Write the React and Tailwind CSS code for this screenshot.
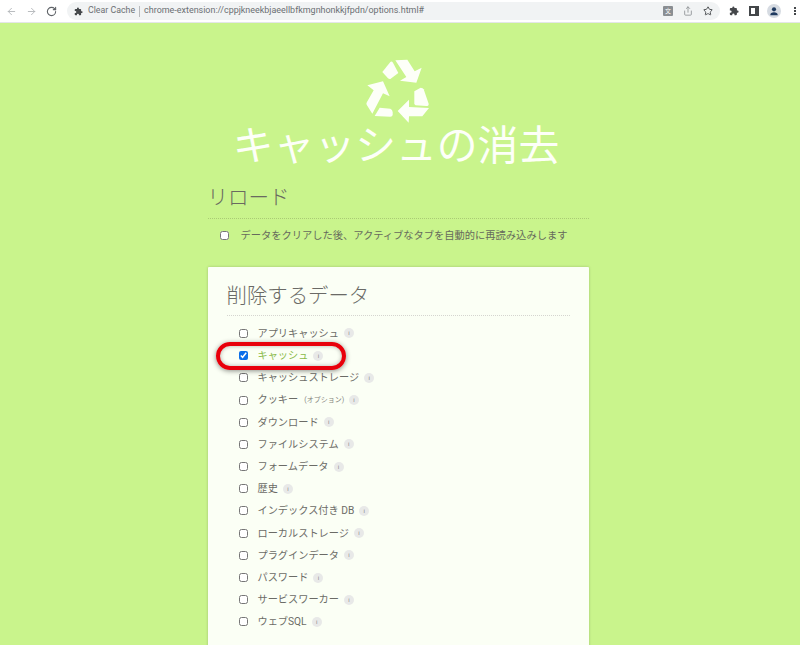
import React from 'react';
import { ArrowLeft, ArrowRight, RotateCw, Star, Share } from 'lucide-react';

const JP = "font-['Roboto','Noto_Sans_CJK_JP',sans-serif]";

const items = [
  { label: 'アプリキャッシュ' },
  { label: 'キャッシュ', checked: true },
  { label: 'キャッシュストレージ' },
  { label: 'クッキー', note: '(オプション)' },
  { label: 'ダウンロード' },
  { label: 'ファイルシステム' },
  { label: 'フォームデータ' },
  { label: '歴史' },
  { label: 'インデックス付き DB' },
  { label: 'ローカルストレージ' },
  { label: 'プラグインデータ' },
  { label: 'パスワード' },
  { label: 'サービスワーカー' },
  { label: 'ウェブSQL' },
];

const PuzzleIcon = ({ className }) => (
  <svg viewBox="0 0 24 24" className={className} fill="currentColor">
    <path d="M20.5 11H19V7a2 2 0 0 0-2-2h-4V3.5a2.5 2.5 0 0 0-5 0V5H4a2 2 0 0 0-2 2v3.8h1.5a2.7 2.7 0 0 1 0 5.4H2V20a2 2 0 0 0 2 2h3.8v-1.5a2.7 2.7 0 0 1 5.4 0V22H17a2 2 0 0 0 2-2v-4h1.5a2.5 2.5 0 0 0 0-5z" />
  </svg>
);

const RecycleLogo = () => (
  <svg viewBox="430 25 210 210" className="h-[70px] w-[70px]" fill="#fdfff8">
    <path d="M527 35 L563 33 L585 68 L606 57 L590 102 L541 96 L560 85 Z" />
    <path d="M488 70 L512 40 Q516 36 520 42 L536 73 L512 91 Q508 92 505 89 Z" />
    <path d="M443 110 L490 98 L510 143 L490 134 L458 195 L441 168 Q439 164 442 160 L462 125 Z" />
    <path d="M465 202 L480 177 L512 180 Q518 182 519 190 L519 199 Q518 204 512 204 Z" />
    <path d="M534 187 L568 153 L568 175 L628 178 L608 203 L568 203 L567 222 Z" />
    <path d="M584 128 L603 117 Q610 117 612 122 L627 165 Q628 172 620 172 L588 170 Q584 168 584 164 Z" />
  </svg>
);

const Toolbar = () => (
  <div className="flex h-[23px] items-center border-b border-[#e4e6e8] bg-white text-[#5f6368]">
    <div className="flex w-[67px] items-center gap-[9px] pl-[6px]">
      <ArrowLeft className="h-[11px] w-[11px] text-[#b4b7ba]" strokeWidth={2} />
      <ArrowRight className="h-[11px] w-[11px] text-[#b4b7ba]" strokeWidth={2} />
      <RotateCw className="h-[11px] w-[11px] text-[#5f6368]" strokeWidth={2.4} />
    </div>
    <div className="flex h-[18px] w-[653px] items-center rounded-full bg-[#f1f3f4] pl-[7px] pr-[7px]">
      <PuzzleIcon className="h-[9px] w-[9px] text-[#44474a]" />
      <span className="ml-[5px] text-[8.8px] text-[#6b6f73]">Clear Cache</span>
      <span className="mx-[4px] h-[11px] w-px bg-[#b8babd]" />
      <span className="text-[8.95px] text-[#6b6f73]">chrome-extension://cppjkneekbjaeellbfkmgnhonkkjfpdn/options.html#</span>
      <div className="ml-auto flex items-center gap-[10px]">
        <span className="flex h-[10px] w-[10px] items-center justify-center rounded-[1px] bg-[#8a8e92] text-[6px] leading-none text-white">文</span>
        <Share className="h-[10px] w-[10px] text-[#8a8e92]" strokeWidth={2} />
        <Star className="h-[10px] w-[10px] text-[#44474a]" strokeWidth={2.2} />
      </div>
    </div>
    <div className="ml-[9px] flex items-center text-[#44474a]">
      <PuzzleIcon className="h-[10px] w-[10px]" />
      <span className="ml-[10px] h-[10px] w-[10px] border-2 border-r-[4px] border-[#44474a]" />
      <span className="ml-[8px] flex h-[14px] w-[14px] items-center justify-center rounded-full bg-[#d6dbe2]">
        <svg viewBox="0 0 24 24" className="h-[10px] w-[10px]" fill="#1f3a5f">
          <circle cx="12" cy="8" r="5" />
          <path d="M3 22c0-5 4-7 9-7s9 2 9 7z" />
        </svg>
      </span>
      <span className="ml-[13px] flex flex-col gap-px">
        <span className="h-[2px] w-[2px] bg-[#44474a]" />
        <span className="h-[2px] w-[2px] bg-[#44474a]" />
        <span className="h-[2px] w-[2px] bg-[#44474a]" />
      </span>
    </div>
  </div>
);

const Row = ({ label, note, checked }) => (
  <div className="flex h-[22.2px] items-center pl-[12px]">
    <input type="checkbox" defaultChecked={checked} className="h-[9px] w-[9px] accent-[#0b6ee8]" />
    <span className={`ml-[10px] text-[10.2px] ${checked ? 'text-[#8aba48]' : 'text-[#6b6b66]'}`}>{label}</span>
    {note && <span className="ml-[6px] text-[7px] text-[#85857d]">{note}</span>}
    <span className="ml-[5px] flex h-[10px] w-[10px] items-center justify-center rounded-full bg-[#e8e9e8] text-[6px] leading-none text-[#8a8a8a]">i</span>
  </div>
);

export default function App() {
  return (
    <div className={`h-[645px] overflow-hidden bg-[#c9f48c] ${JP}`}>
      <Toolbar />
      <main className="mx-auto flex w-[381px] translate-x-[-2px] flex-col">
        <div className="mt-[34px] flex justify-center">
          <RecycleLogo />
        </div>
        <h1 className="mt-[-9px] pr-[4px] text-center text-[40.8px] font-normal leading-[56px] text-[#fdfff8]">キャッシュの消去</h1>
        <h2 className="mt-[9px] border-b border-dotted border-[#aacb75] pb-[5px] text-[20.5px] font-light leading-[30px] text-[#6a6a60]">リロード</h2>
        <label className="mt-[9px] flex items-center pl-[12px] text-[10.25px] text-[#666a5c]">
          <input type="checkbox" className="h-[9px] w-[9px]" />
          <span className="ml-[12px] whitespace-nowrap">データをクリアした後、アクティブなタブを自動的に再読み込みします</span>
        </label>
        <section className="relative mt-[24px] h-[400px] rounded-[1px] bg-[#fbfff5] px-[19px] pt-[14px] shadow-[0_0_3px_rgba(0,0,0,0.2)]">
          <h2 className="border-b border-dotted border-[#d5d5d0] pb-[4px] text-[20.4px] font-light leading-[30px] text-[#6a6a66]">削除するデータ</h2>
          <div className="mt-[6px]">
            {items.map((item) => (
              <Row key={item.label} {...item} />
            ))}
          </div>
          <div className="absolute left-[8px] top-[75px] h-[28px] w-[130px] rounded-full border-[4px] border-[#e8000b] shadow-[0_1px_5px_rgba(0,0,0,0.45),inset_0_0_4px_rgba(0,0,0,0.3)]" />
        </section>
      </main>
    </div>
  );
}
